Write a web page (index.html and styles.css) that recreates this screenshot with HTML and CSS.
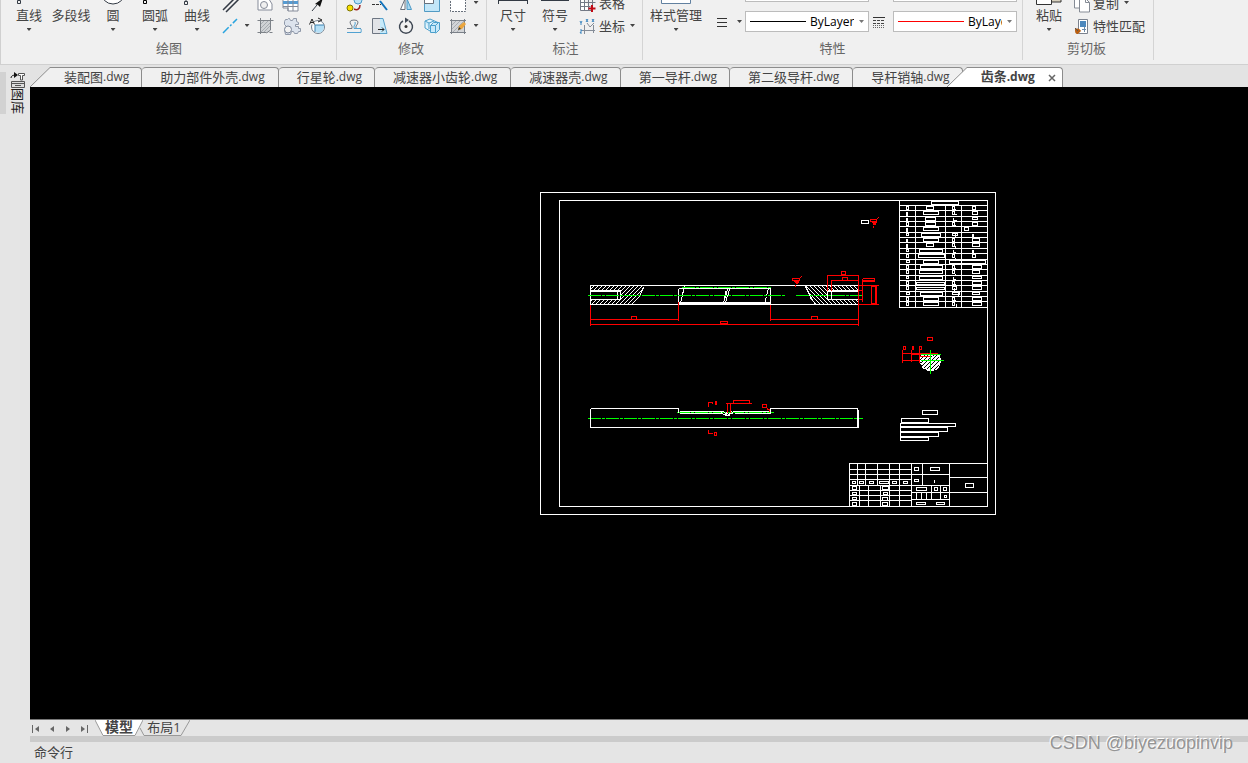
FILE: index.html
```html
<!DOCTYPE html>
<html lang="zh-CN">
<head>
<meta charset="utf-8">
<title>齿条.dwg</title>
<link rel="stylesheet" href="styles.css">
</head>
<body>
<header class="ribbon">
  <section class="group group-draw">
    <div class="items">
      <button class="big"><svg class="big-icon" viewBox="0 0 26 16"><path d="M1.500 9.500h3v3h-3zM4 9l6-6" class="ink"/></svg>直线<i class="arrow"></i></button>
      <button class="big"><svg class="big-icon" viewBox="0 0 26 16"></svg>多段线</button>
      <button class="big"><svg class="big-icon" viewBox="0 0 26 16"><circle cx="13" cy="1" r="12" class="ink white"/></svg>圆<i class="arrow"></i></button>
      <button class="big"><svg class="big-icon" viewBox="0 0 26 16"><path d="M1.500 9.500h3v3h-3zM3 9V7" class="ink heavy"/></svg>圆弧<i class="arrow"></i></button>
      <button class="big"><svg class="big-icon" viewBox="0 0 26 16"><path d="M.5 10.500h3v3h-3zM2 10V7" class="ink"/></svg>曲线<i class="arrow"></i></button>
      <div class="tools">
        <div class="tool-row">
          <button class="tool first" aria-label="双线"><svg viewBox="0 0 20 20"><path d="M3 17 16 4M6 19 19 6" class="ink" stroke-width="1.500"/></svg></button><span class="arrow-gap"></span>
          <button class="tool" aria-label="面域"><svg viewBox="0 0 20 20"><path d="M3 3h9l5 8v6H3z" fill="#fff" stroke="#858b99"/><circle cx="9" cy="12" r="3.500" fill="#f0f0f0" stroke="#858b99"/></svg></button>
          <button class="tool" aria-label="表格"><svg viewBox="0 0 20 20"><path d="M2 5h15v13H7v-3H2z" fill="#fff" stroke="#858b99"/><path d="M2 8h15v3H2z" fill="#569bd2"/><path d="M2 13.500h15M7 5v13M12 5v13" stroke="#858b99"/></svg></button>
          <button class="tool" aria-label="射线"><svg viewBox="0 0 20 20"><path d="m5 18 5-6" class="ink"/><path d="m8 11 8-6-3 9-2-2z" fill="#111"/></svg></button>
        </div>
        <div class="tool-row">
          <button class="tool first" aria-label="构造线"><svg viewBox="0 0 20 20"><path d="m3 17 14-14" stroke="#29a4df" stroke-width="1.500" stroke-dasharray="8 2 2 2"/></svg></button><span class="arrow-gap"><i class="arrow"></i></span>
          <button class="tool" aria-label="图案填充"><svg viewBox="0 0 20 20"><path d="M5 5h11v9l-3 3H5z" fill="#cfd2d5"/><path d="m5 9 4-4m-4 8 8-8m-8 12L16 6M9 16l7-7" stroke="#a6abb0"/><path d="M2.500 4.500h16M5.500 2v16M15.500 2v12l-4 3M2.500 16.500h9m3 0h3" fill="none" stroke="#7d8288"/></svg></button>
          <button class="tool" aria-label="块"><svg viewBox="0 0 20 20"><path d="M4.500 3.500h2l1-1h1l1 2h2l1-2h3v3l2 1v2h-3v2h3v2h2v3h-2l-1 2h-3l-1-2h-2l-1 3h-5l-1-5 2-3-2-2v-3z" fill="#dce3ed" stroke="#8f98a9"/><circle cx="7" cy="13.500" r="3.500" fill="#f2f2f2" stroke="#7d879a"/></svg></button>
          <button class="tool" aria-label="字段"><svg viewBox="0 0 20 20"><circle cx="11" cy="11" r="6.500" fill="#fff" stroke="#737e8b"/><path d="M8 9h9v3l-2 4-4 1-3-2z" fill="#b5dff6"/><path d="M8 9h9M8 9v7" stroke="#3c81ae"/><path d="M2.500 8.500 5 3l2.500 5.500M3.500 6.500h3" fill="#f0f0f0" stroke="#222"/><path d="m11 2 4 2-4 2" fill="none" stroke="#222"/></svg></button>
        </div>
      </div>
    </div>
    <h2>绘图</h2>
  </section>

  <section class="group group-modify">
    <div class="items">
      <div class="tools">
        <div class="tool-row">
          <button class="tool" aria-label="特性刷"><svg viewBox="0 0 20 20"><circle cx="14" cy="7" r="4" fill="#b9e2f7" stroke="#4b98c7"/><circle cx="6" cy="15" r="3" fill="#f8df00" stroke="#7e7500"/><path d="M10 16c4 2 6-1 6-4" fill="none" stroke="#9c2020" stroke-width="1.500"/></svg></button>
          <button class="tool" aria-label="修剪"><svg viewBox="0 0 20 20"><path d="M2 11.500h9" stroke="#333" stroke-dasharray="3 1"/><path d="m10 8 7 9" stroke="#1273bb" stroke-width="2"/></svg></button>
          <button class="tool" aria-label="镜像"><svg viewBox="0 0 20 20"><path d="M4.500 16.500 9 6v10.500z" fill="#fff" stroke="#68707b"/><path d="M11 6v10.500h4.500z" fill="#a9d8f1" stroke="#4d9ac6"/></svg></button>
          <button class="tool" aria-label="缩放"><svg viewBox="0 0 20 20"><path d="M2.500 2v16.500h15V2" fill="#c2e6f8" stroke="#519ac3"/><path d="M2.500 10.500h9V2h-9z" fill="#fff" stroke="#68707b"/></svg></button>
          <button class="tool" aria-label="分解"><svg viewBox="0 0 20 20"><path d="M2.500 2v16.500h15V2" fill="#fff" stroke="#68707b" stroke-dasharray="2 1"/></svg></button><span class="arrow-gap"><i class="arrow"></i></span>
        </div>
        <div class="tool-row">
          <button class="tool" aria-label="偏移"><svg viewBox="0 0 20 20"><path d="M3 12.500h5V10Q6 8 6 6q0-2 4-2t4 2q0 2-2 4v2.500h5" fill="none" stroke="#737a83"/><path d="M3 16.500h14q1-5-2-4h-5V10q2-2 1-4" fill="none" stroke="#51a2d2"/></svg></button>
          <button class="tool" aria-label="拉伸"><svg viewBox="0 0 20 20"><path d="M2.500 2.500h8v15h-8z" fill="#e1e3e7" stroke="#6d7581"/><path d="M10 2.500h3l4 15h-7" fill="#c6eafa" stroke="#56a0ca"/><path d="M8 13.500h6m-2-2 2 2-2 2" fill="none" stroke="#222"/></svg></button>
          <button class="tool" aria-label="旋转"><svg viewBox="0 0 20 20"><path d="M7 5a6.500 6.500 0 1 0 6 0" fill="none" stroke="#3f4854" stroke-width="1.500"/><path d="m9 1.500 4 2.500-4 3z" fill="#3f4854"/><circle cx="10" cy="10.500" r="1.500" fill="#333"/></svg></button>
          <button class="tool" aria-label="三维阵列"><svg viewBox="0 0 20 20"><path d="m3 5 5-2 9 4v6l-3 4-6-2-5-3z" fill="#e4f5fd" stroke="#4b9fcb"/><path d="m3 5 4 2v6M7 7l5-2M8.500 9.500h5v7h-5zM8.500 9.500l3-3h6v7l-3 3M13.500 9.500l3-3" fill="#c7e9fa" stroke="#4b9fcb"/></svg></button>
          <button class="tool" aria-label="编辑填充"><svg viewBox="0 0 20 20"><path d="M4 4h12v12H4z" fill="#d2d4d7"/><path d="m4 9 5-5M4 13l9-9M5 16 16 5M9 16l7-7" stroke="#a8acb2"/><path d="M2 4.500h16M2 16.500h16M3.500 3v15M16.500 3v15" stroke="#7a8088"/><path d="m10 14 1-4 5-4 2 2-4 5z" fill="#eba63e"/><path d="m10 14 1-3 2 2z" fill="#333"/></svg></button><span class="arrow-gap"><i class="arrow"></i></span>
        </div>
      </div>
    </div>
    <h2>修改</h2>
  </section>

  <section class="group group-note">
    <div class="items">
      <button class="big"><svg class="big-icon" viewBox="0 0 30 16"><path d="M.5 0v13M29.500 0v13M1 9.500h28" class="ink"/></svg>尺寸<i class="arrow"></i></button>
      <button class="big"><svg class="big-icon" viewBox="0 0 28 16"><path d="M0 9.500h28" class="ink"/></svg>符号<i class="arrow"></i></button>
      <div class="tools">
        <button class="wide"><svg viewBox="0 0 20 20"><path d="M2.500 3v14.500h11M2.500 5.500h15M2.500 9.500h15M2.500 13.500h10M6.500 3v14M10.500 3v14M14.500 3v10" stroke="#737985" fill="#fff"/><path d="M14 12v7M10.500 15.500h7" stroke="#c00b16" stroke-width="2"/></svg>表格</button>
        <button class="wide"><svg viewBox="0 0 20 20"><path d="M6.500 9v9M4 14.500h13M9 7l3 4 4-4M15.500 9v8" fill="none" stroke="#858d98"/><path d="m8 3 2 3m0-3-2 3M14 3l2 3m0-3-2 3M2 5l1 2 1-2M3 7v2M2 14h2l-2 3h2" fill="none" stroke="#3b85be"/></svg>坐标<i class="arrow"></i></button>
      </div>
    </div>
    <h2>标注</h2>
  </section>

  <section class="group group-props">
    <div class="items">
      <button class="big style-button"><svg class="big-icon" viewBox="0 0 30 16"><path d="M.5 0v12.500h29V0" fill="#fff" stroke="#6281a0"/></svg>样式管理<i class="arrow"></i></button>
      <div class="prop-grid">
        <span></span><label class="combo"><select aria-label="颜色"><option></option></select></label><span></span><label class="combo"><select aria-label="打印样式"><option></option></select></label>
        <button class="line-button" aria-label="线宽"><svg viewBox="0 0 20 20"><path d="M5 6.500h10M5 10.500h10M5 14.500h10" stroke="#333"/></svg><i class="arrow"></i></button>
        <label class="combo"><span class="sample"></span><select aria-label="线宽"><option>ByLayer</option></select><i class="arrow pale"></i></label>
        <svg class="linetype" viewBox="0 0 20 20"><path d="M4 5.500h12" stroke="#333"/><path d="M4 8.500h12M4 11.500h12" stroke="#444" stroke-dasharray="3 1"/><path d="M4 13.500h12M4 15.500h12" stroke="#666" stroke-dasharray="1 1"/></svg>
        <label class="combo"><span class="sample red"></span><select class="short" aria-label="线型"><option>ByLayer</option></select><i class="arrow pale"></i></label>
      </div>
    </div>
    <h2>特性</h2>
  </section>

  <section class="group group-clip">
    <div class="items">
      <button class="big"><svg class="big-icon" viewBox="0 0 26 16"><path d="M14 0h11v11H14z" fill="#d7d0bd" stroke="#333"/><path d="M.5 0v13.500h15V0" fill="#fff" stroke="#333"/></svg>粘贴<i class="arrow"></i></button>
      <div class="tools">
        <button class="wide"><svg viewBox="0 0 20 20"><path d="M2.500 1h7v14h-7z" fill="#fff" stroke="#858b95"/><path d="M7.500 5.500h6l4 4v9.500h-10z" fill="#fff" stroke="#858b95"/><path d="M13.500 5.500v4h4" fill="none" stroke="#858b95"/></svg>复制<i class="arrow"></i></button>
        <button class="wide"><svg viewBox="0 0 20 20"><path d="M6.500 3.500h9v14h-9z" fill="#fff" stroke="#7a818d"/><path d="M8 5h6v6H8z" fill="#4c88bd"/><path d="M10 13.500h4M12.500 11v5" stroke="#6b89a6"/><path d="M3 13c3-1 5 0 6 2l-3 3c-3 0-3-2-3-5z" fill="#b85e12"/><path d="m3 12 3 3" stroke="#555"/></svg>特性匹配</button>
      </div>
    </div>
    <h2>剪切板</h2>
  </section>
</header>

<div class="workspace">
  <aside class="sidebar">
    <span class="handle"></span>
    <button class="library"><svg viewBox="0 0 15 16"><path d="M1 6q0-3 5-3" fill="none" stroke="#111"/><path d="m4 0 4 3-4 3z" fill="#111"/><path d="M8.500 1.500h6v2h-2V8h-2V3.500h-2z" fill="#fff" stroke="#555"/><path d="M1.500 9.500h13v6h-13z" fill="#ddd" stroke="#555"/><path d="M1 11.500h14M5 13.500h6" stroke="#555"/></svg><span>图库</span></button>
  </aside>

  <main class="document">
    <nav class="tabs">
      <svg class="slope" viewBox="0 0 20 20"><path d="M0 20 20 .5V20z" fill="#f0f0f0"/><path d="M0 20 20 .5" stroke="#8c8c8c" fill="none"/></svg>
      <button class="tab tab-first">装配图<span>.dwg</span></button>
      <button class="tab tab-long">助力部件外壳<span>.dwg</span></button>
      <button class="tab">行星轮<span>.dwg</span></button>
      <button class="tab tab-long">减速器小齿轮<span>.dwg</span></button>
      <button class="tab">减速器壳<span>.dwg</span></button>
      <button class="tab">第一导杆<span>.dwg</span></button>
      <button class="tab tab-long">第二级导杆<span>.dwg</span></button>
      <button class="tab">导杆销轴<span>.dwg</span></button>
      <svg class="slope slope-active" viewBox="0 0 20 20"><path d="M0 20 20 .5V20z" fill="#fff"/><path d="M0 20 20 .5" stroke="#8c8c8c" fill="none"/></svg>
      <div class="tab tab-active"><button class="tab-name">齿条<span>.dwg</span></button><button class="close" aria-label="关闭"><svg viewBox="0 0 8 8"><path d="m1 1 6 6m0-6-6 6" stroke="#666" stroke-width="1.500"/></svg></button></div>
    </nav>

    <div class="canvas">
      <svg class="drawing" viewBox="30 87 1218 632" shape-rendering="crispEdges">
        <defs>
          <pattern id="hatch-a" width="4" height="4" patternUnits="userSpaceOnUse" patternTransform="translate(-.5 -.5)"><path d="M0 3h1v1H0zM1 2h1v1H1zM2 1h1v1H2zM3 0h1v1H3z" fill="#fff"/></pattern>
          <pattern id="hatch-b" width="4" height="4" patternUnits="userSpaceOnUse" patternTransform="translate(-.5 -.5)"><path d="M0 0h1v1H0zM1 1h1v1H1zM2 2h1v1H2zM3 3h1v1H3z" fill="#fff"/></pattern>
          <pattern id="hatch-c" width="4" height="4" patternUnits="userSpaceOnUse" patternTransform="translate(-.5 -.5)"><path d="M0 0h4v4H0z" fill="#fff"/><path d="M0 3h1v1H0zM1 2h1v1H1zM2 1h1v1H2zM3 0h1v1H3z" fill="#000"/></pattern>
        </defs>
        <g transform="translate(.5 .5)" fill="none" stroke-width="1">
          <g stroke="#fff">
            <!-- sheet frame -->
            <path d="M540 192h455v322H540zM559 200h428v306H559z"/>
            <!-- parts list grid -->
            <path d="M899 200v107h88M915 205v102M945 205v102M961 205v102M899 205h88M899 210h88M899 216h88M899 221h88M899 226h88M899 232h88M899 237h88M899 242h88M899 248h88M899 253h88M899 259h88M899 264h88M899 269h88M899 275h88M899 280h88M899 285h88M899 291h88M899 296h88M899 301h88"/>
            <path d="M931 201h27v3h-27zM926 206h7v3h-7zM923 211h15v3h-15zM925 217h10v3h-10zM925 222h10v3h-10zM923 227h15v3h-15zM921 233h19v3h-19zM923 238h15v3h-15zM926 243h7v3h-7zM919 249h23v3h-23zM918 254h26v3h-26zM923 260h15v3h-15zM920 265h22v3h-22zM919 270h23v3h-23zM919 276h23v3h-23zM916 282h28v2h-28zM916 287h28v2h-28zM920 292h22v3h-22zM923 297h15v3h-15zM923 302h15v3h-15z"/>
            <path d="M906 206h2v3h-2zM907 211v4M907 217v3M906 222h2v3h-2zM907 227v4M906 233h2v2h-2zM907 238v4M907 243v4M906 249h2v2h-2zM906 254h2v3h-2zM906 260h3v2h-3zM906 265h2v3h-2zM906 270h2v3h-2zM906 276h2v2h-2zM906 281h2v3h-2zM906 286h2v3h-2zM906 292h3v2h-3zM906 297h2v3h-2zM906 302h2v3h-2z" />
            <path d="M906 211v4M906 217v3M906 227v4M906 238v4M906 243v4M972 233v3M972 249v3"/>
            <path d="M952 206h2v3h-2zM955 208v2M952 211h2v3h-2zM954 214h2M953 217v3h3M952 222h2v3h-2zM955 224v2M952 233h5v2h-5zM955 233v4M952 238h2v3h-2zM954 240v3M952 243h2v3h-2zM955 245v2M953 249v3h2M952 254h2v3h-2zM955 257v2M952 265h2v3h-2zM955 267v2M952 270h2v3h-2zM955 273v2M953 276v3h2M952 281h2v3h-2zM955 283v2M952 286h4v3h-4zM954 287v3M952 292h7v2h-7zM958 292v4M952 297h2v3h-2zM955 299v2M952 302h2v3h-2zM956 303v3"/>
            <path d="M972 206h3v3h-3zM972 211h5v3h-5zM972 217h5v2h-5zM972 222h5v3h-5zM964 227h4v3h-4zM973 233v3M972 238h7v3h-7zM972 243h7v3h-7zM973 249v3M972 254h3v3h-3zM949 260h36v3h-36zM972 265h9v3h-9zM972 270h7v3h-7zM972 276h9v2h-9zM972 281h9v3h-9zM972 286h9v3h-9zM972 292h7v2h-7zM972 297h9v3h-9zM972 302h9v3h-9z"/>
            <!-- title block -->
            <path d="M987 463H849v43M857 463v22M865 463v22M877 463v22M889 463v43M899 463v43M911 463v43M922 463v22M949 463v43M859 485v21M868 485v21M880 485v21M849 469h62M849 474h100M849 479h62M849 485h100M849 490h62M849 495h62M849 500h62M911 492h76M911 499h38M949 477h38M931 485v14M940 485v14M916 492v7M921 492v7M926 492v7"/>
            <path d="M914 467h4v3h-4zM930 467h9v3h-9zM914 479h4v2h-4zM934 479v3M965 483h8v4h-8zM916 487h10v3h-10zM934 487h3v3h-3zM943 487h3v3h-3zM944 495h2v2h-2zM916 502h9v2h-9zM936 502h8v2h-8zM852 481h3v2h-3zM859 481h4v2h-4zM869 481h4v2h-4zM879 481h9v2h-9zM892 481h4v2h-4zM903 481h4v2h-4zM852 486h4v3h-4zM852 492h4v2h-4zM852 497h4v2h-4zM852 502h4v3h-4zM882 486h6v3h-6zM883 492h4v2h-4zM882 497h5v3h-5zM882 502h5v3h-5z"/>
            <!-- notes -->
            <path d="M922 410h15v4h-15zM901 418h27v4h-27zM900 423h55v3h-55zM900 427h47v4h-47zM900 432h38v4h-38zM900 437h28v3h-28z"/>
            <path d="M861 220h7v3h-7z"/>
          </g>
          <!-- front view -->
          <path d="M590 285h54l-4 10-3 6-4 3h-43v-5h30v-8h-30z" fill="url(#hatch-a)"/>
          <path d="M805 285h53v6h-31v8h31v5h-43l-5-6z" fill="url(#hatch-b)"/>
          <path d="M590 285h268v19H590zM590 291h30v8h-30M590 290h30M617 291v8M827 291h31M827 299h31M827 290h31M827 291v8M831 291v8M678 288h92M678 288v16M678 303h92M678 302h92M770 288v16M684 286l-2 8-2 9M768 288l-2 8-2 7M727 288l-1 6-2 4-1 5M729 288l-1 5-2 5-1 5M725 291l-1 7M638 297l-7 7M643 287l-5 11M805 286l6 12 4 6" stroke="#fff"/>
          <path d="M587 295h197M795 295h67M681 287h89M587 418h275M676 412h97" stroke="#0f0" stroke-dasharray="13 1 3 1"/>
          <!-- side view -->
          <path d="M590 408h88v4M770 412v-4h87v19H590v-19M858 409v18M679 411h43M679 413h42M732 411h38M734 413h36M721 412l2 2h2l1-2 2 2 3-1 2-1M724 415h5M723 411l4 4 4-4" stroke="#fff"/>
          <!-- section -->
          <path d="M921 355h18l1 4v4l-3 5-4 2h-6l-5-3-2-5v-4z" fill="url(#hatch-c)" stroke="#fff" stroke-dasharray="2 1"/>
          <g stroke="#f00">
            <path d="M590 304v21M678 301v19M770 304v16M858 274v51M590 319h88M770 319h88M590 324h268M631 316h5v3h-5zM720 321h7v2h-7zM811 316h6v3h-6z"/>
            <path d="M827 274v16M831 279v11M827 275h31M831 280h27M841 271h4v3h-4zM842 277h5v3h-5zM862 278v23M862 278h12v2h-12M862 281h12M858 285h20M858 304h20M871 286h4v17h-4zM876 285v19M858 290h4M858 299h4"/>
            <path d="M792 278h7v2h-7zM793 281h5M794 282h4M795 283h2M795 284v2M799 278l2-2M870 219h6v2h-6zM871 222h5M872 223h3M872 224h3M873 225v2M876 219l2-2"/>
            <path d="M927 337h5v3h-5zM902 349v13M911 349v12M919 349v13M902 353h35M910 354h10M919 356h11M902 360h17M903 346h2v3h-2zM912 346h1v3h-1zM919 346h2v3h-2z"/>
            <path d="M708 406v-4h4v1M715 401h1v3h-1zM708 429v4h4M714 432h2v3h-2zM725 403h26M727 402v10M730 402v10M733 400h16v3h-16zM762 404h4v3h-4zM767 407v2h2v2"/>
          </g>
          <path d="M930 349v24M920 354h20M920 360h23" stroke="#0f0"/>
        </g>
      </svg>
    </div>

    <nav class="layouts">
      <button class="page" aria-label="首页"><svg viewBox="0 0 8 8"><path d="M.5 0v8" stroke="#666"/><path d="M7 1v6L3 4z" fill="#666"/></svg></button>
      <button class="page" aria-label="上一页"><svg viewBox="0 0 8 8"><path d="M6 1v6L2 4z" fill="#666"/></svg></button>
      <button class="page" aria-label="下一页"><svg viewBox="0 0 8 8"><path d="M2 1v6l4-3z" fill="#666"/></svg></button>
      <button class="page" aria-label="末页"><svg viewBox="0 0 8 8"><path d="M7.500 0v8" stroke="#666"/><path d="M1 1v6l4-3z" fill="#666"/></svg></button>
      <button class="layout model"><svg viewBox="0 0 48 17"><path d="m0 0 8 16h32l8-16z" fill="#fff"/><path d="m0 0 8 15.500h32L48 0" fill="none" stroke="#999"/></svg><span>模型</span></button>
      <button class="layout second"><svg viewBox="0 0 52 17"><path d="m2 8 4 7.500h37L52 0" fill="none" stroke="#999"/></svg><span>布局1</span></button>
    </nav>
    <div class="splitter"></div>
    <footer class="command">命令行</footer>
  </main>
</div>
<div class="watermark">CSDN @biyezuopinvip</div>
</body>
</html>
```
FILE: styles.css
```css
* { box-sizing: border-box; }
body {
  margin: 0;
  height: 100vh;
  display: flex;
  flex-direction: column;
  overflow: hidden;
  background: #e5e5e5;
  color: #444;
  font: 13px/16px "Open Sans", "Noto Sans CJK SC", sans-serif;
}
button, select { font: inherit; color: inherit; }
button { padding: 0; border: 0; background: none; }
svg { display: block; flex: none; }
.ink { fill: none; stroke: #333a44; }
.white { fill: #fff; }
.heavy { stroke: #000; }

.ribbon {
  display: flex;
  align-items: flex-end;
  flex: none;
  height: 65px;
  overflow: hidden;
  background: #f0f0f0;
  border-bottom: 1px solid #d0d0d0;
  border-left: 1px solid #d0d0d0;
}
.group { display: flex; flex-direction: column; flex: none; margin-bottom: 4px; border-right: 1px solid #d4d4d4; }
.group-draw { padding: 0 6px 0 7px; }
.group-modify { padding: 0 5px 0 4px; }
.group-note { padding: 0 3px 0 5px; }
.group-props { padding: 0 5px; }
.group-clip { padding: 0 8px 0 5px; }
.group h2 { margin: 0; font-size: 13px; font-weight: 400; line-height: 23px; text-align: center; color: #666; }
.items { display: flex; height: 46px; flex: none; }
.big { display: flex; flex-direction: column; align-items: center; width: 42px; white-space: nowrap; }
.big-icon { height: 16px; }
.big .arrow { margin-top: 5px; }
.style-button { width: 56px; }
.arrow { display: block; flex: none; width: 5px; height: 3px; background: #444; clip-path: polygon(0 0, 100% 0, 50% 100%); }
.pale { background: #777; }
.tools { display: flex; flex-direction: column; }
.tool-row { display: flex; }
.tool { display: flex; align-items: center; justify-content: center; width: 26px; height: 23px; }
.tool svg, .wide svg { width: 20px; height: 20px; }
.first { width: 24px; }
.arrow-gap { display: flex; align-items: center; justify-content: center; width: 10px; }
.wide { display: flex; align-items: center; height: 23px; gap: 1px; padding-left: 2px; white-space: nowrap; }
.wide .arrow { margin: 0 4px; }

.prop-grid { display: grid; grid-template-columns: 41px 124px 24px 124px; grid-template-rows: 21px 21px; row-gap: 9px; margin-top: -10px; align-items: center; }
.combo { display: flex; align-items: center; height: 21px; padding: 0 4px; overflow: hidden; background: #fff; border: 1px solid #bcbcbc; color: #000; font-size: 12px; }
.combo select { flex: none; width: 44px; margin-left: 4px; padding: 0; border: 0; background: none; appearance: none; overflow: hidden; text-overflow: clip; }
.combo .short { width: 34px; }
.sample { flex: 1; height: 1px; background: #000; }
.sample + select + .arrow { margin-left: 5px; }
.red { background: #f00; }
.line-button { display: flex; align-items: center; padding-left: 8px; gap: 5px; }
.line-button svg, .linetype { width: 20px; height: 20px; }

.workspace { display: flex; flex: 1; min-height: 0; }
.sidebar { display: flex; align-items: flex-start; flex: none; width: 30px; padding-top: 7px; gap: 4px; }
.handle { width: 6px; height: 42px; background: #d2d2d2; }
.library { display: flex; flex-direction: column; align-items: center; width: 15px; }
.library svg { width: 15px; height: 16px; }
.library span { writing-mode: vertical-rl; text-orientation: sideways; color: #222; }
.document { display: flex; flex-direction: column; flex: 1; min-width: 0; }

.tabs { display: flex; align-items: flex-end; flex: none; height: 22px; background: #e3e3e3; }
.slope { width: 20px; height: 20px; }
.slope-active { position: relative; margin-left: -16px; }
.tab { display: flex; align-items: center; flex: none; height: 20px; padding: 0 12px 2px 18px; border: solid #8c8c8c; border-width: 1px 1px 0 0; border-radius: 4px 4px 0 0; background: #f0f0f0; white-space: nowrap; }
.tab span { font-size: 12px; }
.tab-long { padding-right: 13px; }
.tab-first { padding: 0 12px 2px 14px; border-top-left-radius: 0; }
.tab-active { position: relative; padding: 0 6px 2px 14px; border-top-left-radius: 0; background: #fff; font-weight: 700; }
.close { margin: 2px 0 0 13px; }
.close svg { width: 8px; height: 8px; }

.canvas { flex: 1; min-height: 0; background: #000; }
.drawing { width: 100%; height: 100%; }

.layouts { display: flex; align-items: flex-start; flex: none; height: 17px; border-top: 1px solid #777; padding-left: 1px; }
.page { width: 16px; height: 17px; padding-left: 1px; }
.page svg { width: 8px; height: 8px; }
.layout { display: grid; height: 16px; line-height: 14px; }
.layout svg, .layout span { grid-area: 1 / 1; }
.layout svg { width: 52px; height: 17px; }
.layout span { z-index: 1; }
.model { font-weight: 700; font-size: 14px; }
.model svg { width: 48px; }
.second { margin-left: -5px; }
.splitter { flex: none; height: 6px; background: #cbcbcb; }
.command { flex: none; height: 21px; padding-left: 4px; line-height: 20px; }
.watermark { position: absolute; right: 15px; bottom: 9px; color: #959595; font: 18px/22px "Liberation Sans", sans-serif; text-shadow: -1px -1px 0 #fff; }
```
